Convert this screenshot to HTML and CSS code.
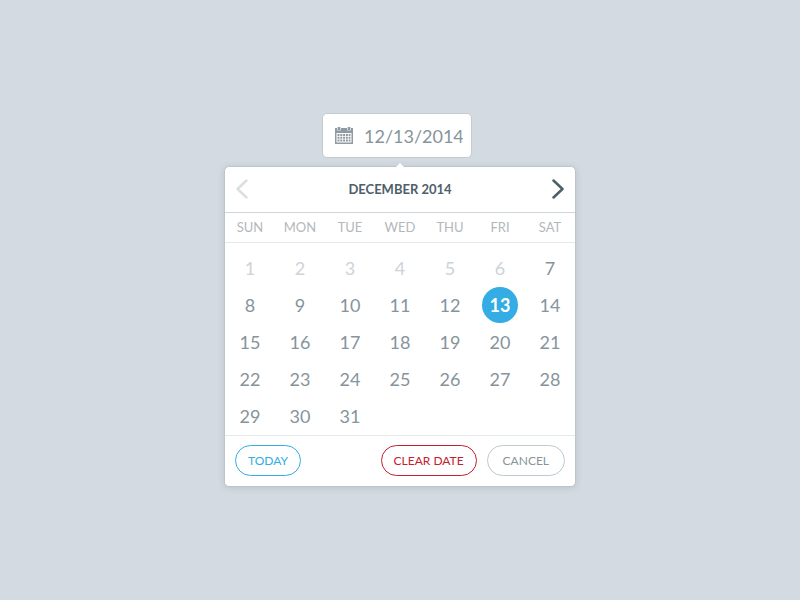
FILE: index.html
```html
<!DOCTYPE html>
<html lang="en">
<head>
    <meta charset="UTF-8">
    <meta name="viewport" content="width=device-width, initial-scale=1.0">
    <title>Date Picker</title>
    <link rel="stylesheet" href="styles.css">
</head>
<body>
    <div class="picker">
        <label class="date-field">
            <svg class="date-icon" width="18" height="17" viewBox="0 0 18 17" role="img" aria-label="Date">
                <path fill="#8f9ba1" fill-rule="evenodd" d="M0 1h18v16H0zM1.500 6v9.500h15V6z"/>
                <path fill="#d4dae2" d="M2 0h4v3.500H2zM12 0h4v3.500h-4z"/>
                <path fill="#8f9ba1" d="M3 0h2v3H3zM13 0h2v3h-2z"/>
                <path fill="none" stroke="#8f9ba1" stroke-width="2" stroke-dasharray="2 .8" d="M2.500 8h13M2.500 10.700h13M2.500 13.400h13"/>
            </svg>
            <input type="text" name="date" value="12/13/2014">
        </label>

        <div class="calendar">
            <!-- Month navigation -->
            <div class="calendar-header">
                <button type="button" class="nav prev" aria-label="Previous month">
                    <svg width="12" height="20" viewBox="0 0 12 20"><path d="M10.500 1.500L1.500 10l9 8.500"/></svg>
                </button>
                <h1>DECEMBER 2014</h1>
                <button type="button" class="nav next" aria-label="Next month">
                    <svg width="12" height="20" viewBox="0 0 12 20"><path d="M1.500 1.500l9 8.500-9 8.500"/></svg>
                </button>
            </div>

            <!-- Days -->
            <table class="days">
                <thead>
                    <tr><th>SUN</th><th>MON</th><th>TUE</th><th>WED</th><th>THU</th><th>FRI</th><th>SAT</th></tr>
                </thead>
                <tbody>
                    <tr>
                        <td><button type="button" disabled>1</button></td>
                        <td><button type="button" disabled>2</button></td>
                        <td><button type="button" disabled>3</button></td>
                        <td><button type="button" disabled>4</button></td>
                        <td><button type="button" disabled>5</button></td>
                        <td><button type="button" disabled>6</button></td>
                        <td><button type="button">7</button></td>
                    </tr>
                    <tr>
                        <td><button type="button">8</button></td>
                        <td><button type="button">9</button></td>
                        <td><button type="button">10</button></td>
                        <td><button type="button">11</button></td>
                        <td><button type="button">12</button></td>
                        <td><button type="button" class="selected">13</button></td>
                        <td><button type="button">14</button></td>
                    </tr>
                    <tr>
                        <td><button type="button">15</button></td>
                        <td><button type="button">16</button></td>
                        <td><button type="button">17</button></td>
                        <td><button type="button">18</button></td>
                        <td><button type="button">19</button></td>
                        <td><button type="button">20</button></td>
                        <td><button type="button">21</button></td>
                    </tr>
                    <tr>
                        <td><button type="button">22</button></td>
                        <td><button type="button">23</button></td>
                        <td><button type="button">24</button></td>
                        <td><button type="button">25</button></td>
                        <td><button type="button">26</button></td>
                        <td><button type="button">27</button></td>
                        <td><button type="button">28</button></td>
                    </tr>
                    <tr>
                        <td><button type="button">29</button></td>
                        <td><button type="button">30</button></td>
                        <td><button type="button">31</button></td>
                        <td></td>
                        <td></td>
                        <td></td>
                        <td></td>
                    </tr>
                </tbody>
            </table>

            <!-- Actions -->
            <div class="calendar-footer">
                <button type="button" class="action today">TODAY</button>
                <button type="button" class="action clear">CLEAR DATE</button>
                <button type="button" class="action cancel">CANCEL</button>
            </div>
        </div>
    </div>
</body>
</html>
```

FILE: styles.css
```css
* {
    box-sizing: border-box;
}
body {
    font-family: Lato, 'Liberation Sans', sans-serif;
    background-color: #d4dae2;
    color: #87949b;
    margin: 0;
    padding: 113px 20px 20px;
}
button {
    font-family: inherit;
    background: none;
    border: none;
    padding: 0;
    cursor: pointer;
}
.picker {
    max-width: 352px;
    margin: 0 auto;
}
.date-field {
    display: flex;
    align-items: center;
    gap: 11px;
    width: 150px;
    height: 45px;
    margin-left: 98px;
    padding: 0 8px 0 12px;
    background: #fff;
    border: 1px solid #c3ccd2;
    border-radius: 5px;
}
.date-icon {
    flex: none;
}
.date-field input {
    width: 100%;
    min-width: 0;
    padding: 0;
    border: none;
    outline: none;
    background: none;
    font-family: inherit;
    font-size: 18px;
    color: #87949b;
}
.calendar {
    position: relative;
    margin-top: 8px;
    background: #fff;
    border: 1px solid #bcc7cc;
    border-radius: 5px;
    box-shadow: 0 1px 6px rgba(80, 95, 110, 0.2);
}
/* Pointer towards the date field */
.calendar::before {
    content: "";
    position: absolute;
    top: -4px;
    left: 50%;
    margin-left: -4px;
    border: 4px solid transparent;
    border-top: none;
    border-bottom: 4px solid #fff;
}
.calendar-header {
    display: flex;
    align-items: center;
    justify-content: space-between;
    height: 46px;
    padding: 0 11px 2px;
    border-bottom: 1px solid #d0d7da;
}
.calendar-header h1 {
    margin: 0;
    font-size: 13px;
    font-weight: bold;
    color: #4c6069;
}
.nav {
    display: flex;
}
.nav svg {
    fill: none;
    stroke: #4c6069;
    stroke-width: 2.5;
    stroke-linecap: round;
    stroke-linejoin: round;
}
.nav.prev svg {
    stroke: #dcdfe0;
}
.days {
    width: 100%;
    table-layout: fixed;
    border-collapse: collapse;
}
.days th {
    height: 29px;
    padding: 0;
    font-size: 13px;
    font-weight: normal;
    color: #b4b8ba;
    border-bottom: 1px solid #e4e9ea;
}
.days tbody::before {
    content: "";
    display: block;
    height: 7px;
}
.days td {
    height: 37px;
    padding: 0;
    text-align: center;
}
.days td button {
    display: block;
    width: 36px;
    height: 36px;
    margin: 0 auto;
    border-radius: 50%;
    font-size: 18px;
    color: #87949b;
}
.days td button:disabled {
    color: #cdd3d6;
    cursor: default;
}
.days td button.selected {
    background-color: #33ade3;
    color: #fff;
    font-weight: bold;
}
.calendar-footer {
    display: flex;
    gap: 10px;
    padding: 9px 10px 10px;
    border-top: 1px solid #e4e9ea;
}
.action {
    height: 31px;
    padding: 0 12px;
    border: 1px solid;
    border-radius: 16px;
    font-size: 12px;
}
.today {
    margin-right: auto;
    color: #33ade3;
}
.clear {
    color: #c4202e;
}
.cancel {
    padding: 0 15px;
    border-color: #c0c9cd;
    color: #87949b;
}
```
